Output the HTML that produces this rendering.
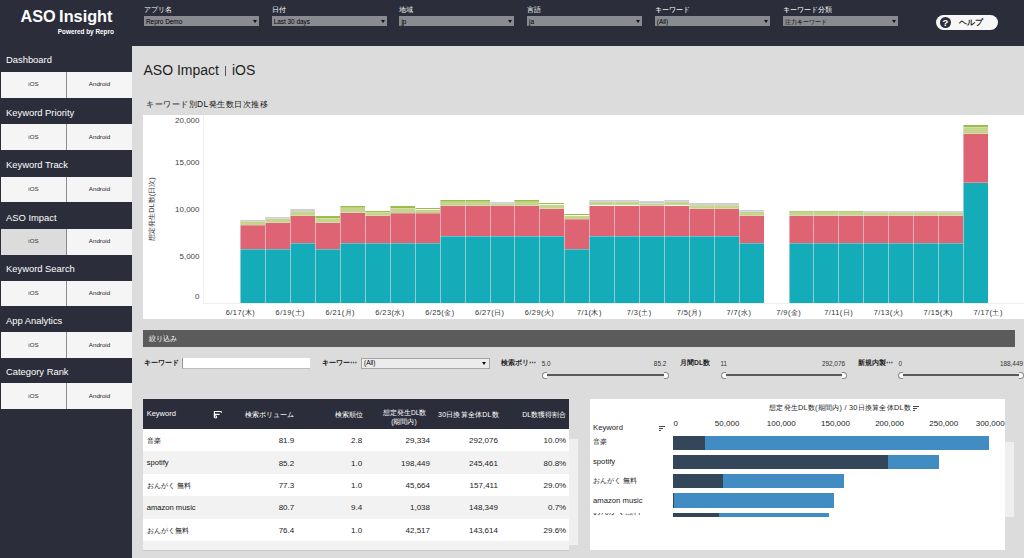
<!DOCTYPE html><html><head><meta charset="utf-8"><style>
*{margin:0;padding:0;box-sizing:border-box}
html,body{width:1024px;height:558px;overflow:hidden}
body{position:relative;background:#dcdcdc;font-family:"Liberation Sans",sans-serif;color:#222}
.ab{position:absolute}
.t{position:absolute;white-space:nowrap;line-height:1}
</style></head><body>
<div class="ab" style="left:0;top:0;width:1024px;height:46px;background:#2b2e3a"></div>
<div class="ab" style="left:0;top:46px;width:132px;height:512px;background:#2b2e3a"></div>
<div class="t" style="left:20.5px;top:7.6px;font-size:16.3px;font-weight:bold;color:#fff;word-spacing:-1.2px;letter-spacing:0px">ASO Insight</div>
<div class="t" style="left:57.8px;top:29.3px;font-size:6.4px;font-weight:bold;color:#fff">Powered by Repro</div>
<div class="t" style="left:144.0px;top:7.2px;font-size:6.8px;color:#fff">アプリ名</div>
<div class="ab" style="left:144.0px;top:16px;width:115px;height:10px;background:#8a8b90"></div>
<div class="t" style="left:146.0px;top:18.5px;font-size:6.4px;color:#000">Repro Demo</div>
<div class="ab" style="left:253.0px;top:20px;width:0;height:0;border-left:2.5px solid transparent;border-right:2.5px solid transparent;border-top:3px solid #111"></div>
<div class="t" style="left:271.7px;top:7.2px;font-size:6.8px;color:#fff">日付</div>
<div class="ab" style="left:271.7px;top:16px;width:115px;height:10px;background:#8a8b90"></div>
<div class="t" style="left:273.7px;top:18.5px;font-size:6.4px;color:#000">Last 30 days</div>
<div class="ab" style="left:380.7px;top:20px;width:0;height:0;border-left:2.5px solid transparent;border-right:2.5px solid transparent;border-top:3px solid #111"></div>
<div class="t" style="left:399.4px;top:7.2px;font-size:6.8px;color:#fff">地域</div>
<div class="ab" style="left:399.4px;top:16px;width:115px;height:10px;background:#8a8b90"></div>
<div class="t" style="left:401.4px;top:18.5px;font-size:6.4px;color:#000">jp</div>
<div class="ab" style="left:508.4px;top:20px;width:0;height:0;border-left:2.5px solid transparent;border-right:2.5px solid transparent;border-top:3px solid #111"></div>
<div class="t" style="left:527.1px;top:7.2px;font-size:6.8px;color:#fff">言語</div>
<div class="ab" style="left:527.1px;top:16px;width:115px;height:10px;background:#8a8b90"></div>
<div class="t" style="left:529.1px;top:18.5px;font-size:6.4px;color:#000">ja</div>
<div class="ab" style="left:636.1px;top:20px;width:0;height:0;border-left:2.5px solid transparent;border-right:2.5px solid transparent;border-top:3px solid #111"></div>
<div class="t" style="left:654.8px;top:7.2px;font-size:6.8px;color:#fff">キーワード</div>
<div class="ab" style="left:654.8px;top:16px;width:115px;height:10px;background:#8a8b90"></div>
<div class="t" style="left:656.8px;top:18.5px;font-size:6.4px;color:#000">(All)</div>
<div class="ab" style="left:763.8px;top:20px;width:0;height:0;border-left:2.5px solid transparent;border-right:2.5px solid transparent;border-top:3px solid #111"></div>
<div class="t" style="left:782.5px;top:7.2px;font-size:6.8px;color:#fff">キーワード分類</div>
<div class="ab" style="left:782.5px;top:16px;width:115px;height:10px;background:#8a8b90"></div>
<div class="t" style="left:784.5px;top:18.5px;font-size:6.4px;color:#000">注力キーワード</div>
<div class="ab" style="left:891.5px;top:20px;width:0;height:0;border-left:2.5px solid transparent;border-right:2.5px solid transparent;border-top:3px solid #111"></div>
<div class="ab" style="left:936px;top:14.5px;width:62px;height:15.5px;border-radius:8px;background:#f7f7f7"></div>
<div class="ab" style="left:940px;top:16.8px;width:11px;height:11px;border-radius:50%;background:#2b2e3a"></div>
<div class="t" style="left:942.6px;top:17.9px;font-size:9.6px;font-weight:bold;color:#fff">?</div>
<div class="t" style="left:959.3px;top:18.6px;font-size:7.8px;font-weight:bold;color:#222">ヘルプ</div>
<div class="t" style="left:6px;top:54.7px;font-size:9.4px;color:#fff">Dashboard</div>
<div class="ab" style="left:1px;top:72px;width:65px;height:25.6px;background:#f5f5f5"></div>
<div class="ab" style="left:66px;top:72px;width:1px;height:25.6px;background:#8c8c8c"></div>
<div class="ab" style="left:67px;top:72px;width:65px;height:25.6px;background:#f5f5f5"></div>
<div class="t" style="left:1px;width:65px;text-align:center;top:81.3px;font-size:6.2px;color:#333">iOS</div>
<div class="t" style="left:67px;width:65px;text-align:center;top:81.3px;font-size:6.2px;color:#222">Android</div>
<div class="t" style="left:6px;top:107.9px;font-size:9.4px;color:#fff">Keyword Priority</div>
<div class="ab" style="left:1px;top:124.3px;width:65px;height:25.6px;background:#f5f5f5"></div>
<div class="ab" style="left:66px;top:124.3px;width:1px;height:25.6px;background:#8c8c8c"></div>
<div class="ab" style="left:67px;top:124.3px;width:65px;height:25.6px;background:#f5f5f5"></div>
<div class="t" style="left:1px;width:65px;text-align:center;top:133.6px;font-size:6.2px;color:#333">iOS</div>
<div class="t" style="left:67px;width:65px;text-align:center;top:133.6px;font-size:6.2px;color:#222">Android</div>
<div class="t" style="left:6px;top:160.2px;font-size:9.4px;color:#fff">Keyword Track</div>
<div class="ab" style="left:1px;top:176.6px;width:65px;height:25.6px;background:#f5f5f5"></div>
<div class="ab" style="left:66px;top:176.6px;width:1px;height:25.6px;background:#8c8c8c"></div>
<div class="ab" style="left:67px;top:176.6px;width:65px;height:25.6px;background:#f5f5f5"></div>
<div class="t" style="left:1px;width:65px;text-align:center;top:185.9px;font-size:6.2px;color:#333">iOS</div>
<div class="t" style="left:67px;width:65px;text-align:center;top:185.9px;font-size:6.2px;color:#222">Android</div>
<div class="t" style="left:6px;top:212.6px;font-size:9.4px;color:#fff">ASO Impact</div>
<div class="ab" style="left:1px;top:229px;width:65px;height:25.6px;background:#dcdcdc"></div>
<div class="ab" style="left:66px;top:229px;width:1px;height:25.6px;background:#8c8c8c"></div>
<div class="ab" style="left:67px;top:229px;width:65px;height:25.6px;background:#f5f5f5"></div>
<div class="t" style="left:1px;width:65px;text-align:center;top:238.3px;font-size:6.2px;color:#333">iOS</div>
<div class="t" style="left:67px;width:65px;text-align:center;top:238.3px;font-size:6.2px;color:#222">Android</div>
<div class="t" style="left:6px;top:264.2px;font-size:9.4px;color:#fff">Keyword Search</div>
<div class="ab" style="left:1px;top:280.6px;width:65px;height:25.6px;background:#f5f5f5"></div>
<div class="ab" style="left:66px;top:280.6px;width:1px;height:25.6px;background:#8c8c8c"></div>
<div class="ab" style="left:67px;top:280.6px;width:65px;height:25.6px;background:#f5f5f5"></div>
<div class="t" style="left:1px;width:65px;text-align:center;top:289.9px;font-size:6.2px;color:#333">iOS</div>
<div class="t" style="left:67px;width:65px;text-align:center;top:289.9px;font-size:6.2px;color:#222">Android</div>
<div class="t" style="left:6px;top:315.8px;font-size:9.4px;color:#fff">App Analytics</div>
<div class="ab" style="left:1px;top:332.2px;width:65px;height:25.6px;background:#f5f5f5"></div>
<div class="ab" style="left:66px;top:332.2px;width:1px;height:25.6px;background:#8c8c8c"></div>
<div class="ab" style="left:67px;top:332.2px;width:65px;height:25.6px;background:#f5f5f5"></div>
<div class="t" style="left:1px;width:65px;text-align:center;top:341.5px;font-size:6.2px;color:#333">iOS</div>
<div class="t" style="left:67px;width:65px;text-align:center;top:341.5px;font-size:6.2px;color:#222">Android</div>
<div class="t" style="left:6px;top:366.9px;font-size:9.4px;color:#fff">Category Rank</div>
<div class="ab" style="left:1px;top:383.3px;width:65px;height:25.6px;background:#f5f5f5"></div>
<div class="ab" style="left:66px;top:383.3px;width:1px;height:25.6px;background:#8c8c8c"></div>
<div class="ab" style="left:67px;top:383.3px;width:65px;height:25.6px;background:#f5f5f5"></div>
<div class="t" style="left:1px;width:65px;text-align:center;top:392.6px;font-size:6.2px;color:#333">iOS</div>
<div class="t" style="left:67px;width:65px;text-align:center;top:392.6px;font-size:6.2px;color:#222">Android</div>
<div class="t" style="left:143.5px;top:62.6px;font-size:14px;color:#1e1e1e">ASO Impact<span style="display:inline-block;width:6.5px"></span><span style="display:inline-block;width:1px;height:10px;background:#555;vertical-align:-1px"></span><span style="display:inline-block;width:5.5px"></span>iOS</div>
<div class="t" style="left:146px;top:99.5px;font-size:8.4px;letter-spacing:0.5px;color:#111">キーワード別DL発生数日次推移</div>
<div class="ab" style="left:143px;top:115px;width:881px;height:204px;background:#fff"></div>
<div class="ab" style="left:203px;top:115px;width:1px;height:188px;background:#eeeeee"></div>
<div class="ab" style="left:203px;top:303px;width:821px;height:1px;background:#eeeeee"></div>
<div class="t" style="right:824.5px;top:117.2px;font-size:8px;color:#444">20,000</div>
<div class="t" style="right:824.5px;top:159.1px;font-size:8px;color:#444">15,000</div>
<div class="t" style="right:824.5px;top:205.7px;font-size:8px;color:#444">10,000</div>
<div class="t" style="right:824.5px;top:252.6px;font-size:8px;color:#444">5,000</div>
<div class="t" style="right:824.5px;top:292.8px;font-size:8px;color:#444">0</div>
<div class="t" style="left:151.9px;top:209.4px;font-size:7.4px;color:#333;transform:translate(-50%,-50%) rotate(-90deg)">想定発生DL数(日次)</div>
<div class="ab" style="left:240px;top:219.70px;width:25px;height:1.60px;background:#cfcfd2"></div>
<div class="ab" style="left:240px;top:221.30px;width:25px;height:3.70px;background:#c5d58c"></div>
<div class="ab" style="left:240px;top:225.00px;width:25px;height:24.20px;background:#de6373"></div>
<div class="ab" style="left:240px;top:249.20px;width:25px;height:53.80px;background:#13acb8"></div>
<div class="ab" style="left:240px;top:219.70px;width:1px;height:83.30px;background:rgba(225,225,225,.6)"></div>
<div class="ab" style="left:240px;top:220.80px;width:25px;height:1px;background:rgba(235,235,235,.35)"></div>
<div class="ab" style="left:240px;top:224.50px;width:25px;height:1px;background:rgba(235,235,235,.35)"></div>
<div class="ab" style="left:240px;top:248.70px;width:25px;height:1px;background:rgba(235,235,235,.35)"></div>
<div class="ab" style="left:265px;top:217.30px;width:25px;height:1.50px;background:#cfcfd2"></div>
<div class="ab" style="left:265px;top:218.80px;width:25px;height:3.90px;background:#c5d58c"></div>
<div class="ab" style="left:265px;top:222.70px;width:25px;height:26.50px;background:#de6373"></div>
<div class="ab" style="left:265px;top:249.20px;width:25px;height:53.80px;background:#13acb8"></div>
<div class="ab" style="left:265px;top:217.30px;width:1px;height:85.70px;background:rgba(225,225,225,.6)"></div>
<div class="ab" style="left:265px;top:218.30px;width:25px;height:1px;background:rgba(235,235,235,.35)"></div>
<div class="ab" style="left:265px;top:222.20px;width:25px;height:1px;background:rgba(235,235,235,.35)"></div>
<div class="ab" style="left:265px;top:248.70px;width:25px;height:1px;background:rgba(235,235,235,.35)"></div>
<div class="ab" style="left:290px;top:209.40px;width:25px;height:1.60px;background:#cfcfd2"></div>
<div class="ab" style="left:290px;top:211.00px;width:25px;height:4.80px;background:#c5d58c"></div>
<div class="ab" style="left:290px;top:215.80px;width:25px;height:27.30px;background:#de6373"></div>
<div class="ab" style="left:290px;top:243.10px;width:25px;height:59.90px;background:#13acb8"></div>
<div class="ab" style="left:290px;top:209.40px;width:1px;height:93.60px;background:rgba(225,225,225,.6)"></div>
<div class="ab" style="left:290px;top:210.50px;width:25px;height:1px;background:rgba(235,235,235,.35)"></div>
<div class="ab" style="left:290px;top:215.30px;width:25px;height:1px;background:rgba(235,235,235,.35)"></div>
<div class="ab" style="left:290px;top:242.60px;width:25px;height:1px;background:rgba(235,235,235,.35)"></div>
<div class="ab" style="left:315px;top:216.40px;width:25px;height:1.60px;background:#9cbd48"></div>
<div class="ab" style="left:315px;top:218.00px;width:25px;height:4.70px;background:#c5d58c"></div>
<div class="ab" style="left:315px;top:222.70px;width:25px;height:26.50px;background:#de6373"></div>
<div class="ab" style="left:315px;top:249.20px;width:25px;height:53.80px;background:#13acb8"></div>
<div class="ab" style="left:315px;top:216.40px;width:1px;height:86.60px;background:rgba(225,225,225,.6)"></div>
<div class="ab" style="left:315px;top:217.50px;width:25px;height:1px;background:rgba(235,235,235,.35)"></div>
<div class="ab" style="left:315px;top:222.20px;width:25px;height:1px;background:rgba(235,235,235,.35)"></div>
<div class="ab" style="left:315px;top:248.70px;width:25px;height:1px;background:rgba(235,235,235,.35)"></div>
<div class="ab" style="left:340px;top:206.00px;width:25px;height:1.60px;background:#9cbd48"></div>
<div class="ab" style="left:340px;top:207.60px;width:25px;height:5.10px;background:#c5d58c"></div>
<div class="ab" style="left:340px;top:212.70px;width:25px;height:30.40px;background:#de6373"></div>
<div class="ab" style="left:340px;top:243.10px;width:25px;height:59.90px;background:#13acb8"></div>
<div class="ab" style="left:340px;top:206.00px;width:1px;height:97.00px;background:rgba(225,225,225,.6)"></div>
<div class="ab" style="left:340px;top:207.10px;width:25px;height:1px;background:rgba(235,235,235,.35)"></div>
<div class="ab" style="left:340px;top:212.20px;width:25px;height:1px;background:rgba(235,235,235,.35)"></div>
<div class="ab" style="left:340px;top:242.60px;width:25px;height:1px;background:rgba(235,235,235,.35)"></div>
<div class="ab" style="left:365px;top:210.60px;width:25px;height:1.60px;background:#9cbd48"></div>
<div class="ab" style="left:365px;top:212.20px;width:25px;height:3.60px;background:#c5d58c"></div>
<div class="ab" style="left:365px;top:215.80px;width:25px;height:27.30px;background:#de6373"></div>
<div class="ab" style="left:365px;top:243.10px;width:25px;height:59.90px;background:#13acb8"></div>
<div class="ab" style="left:365px;top:210.60px;width:1px;height:92.40px;background:rgba(225,225,225,.6)"></div>
<div class="ab" style="left:365px;top:211.70px;width:25px;height:1px;background:rgba(235,235,235,.35)"></div>
<div class="ab" style="left:365px;top:215.30px;width:25px;height:1px;background:rgba(235,235,235,.35)"></div>
<div class="ab" style="left:365px;top:242.60px;width:25px;height:1px;background:rgba(235,235,235,.35)"></div>
<div class="ab" style="left:390px;top:206.40px;width:25px;height:1.80px;background:#9cbd48"></div>
<div class="ab" style="left:390px;top:208.20px;width:25px;height:4.80px;background:#c5d58c"></div>
<div class="ab" style="left:390px;top:213.00px;width:25px;height:30.10px;background:#de6373"></div>
<div class="ab" style="left:390px;top:243.10px;width:25px;height:59.90px;background:#13acb8"></div>
<div class="ab" style="left:390px;top:206.40px;width:1px;height:96.60px;background:rgba(225,225,225,.6)"></div>
<div class="ab" style="left:390px;top:207.70px;width:25px;height:1px;background:rgba(235,235,235,.35)"></div>
<div class="ab" style="left:390px;top:212.50px;width:25px;height:1px;background:rgba(235,235,235,.35)"></div>
<div class="ab" style="left:390px;top:242.60px;width:25px;height:1px;background:rgba(235,235,235,.35)"></div>
<div class="ab" style="left:415px;top:207.70px;width:25px;height:1.80px;background:#9cbd48"></div>
<div class="ab" style="left:415px;top:209.50px;width:25px;height:3.50px;background:#c5d58c"></div>
<div class="ab" style="left:415px;top:213.00px;width:25px;height:30.10px;background:#de6373"></div>
<div class="ab" style="left:415px;top:243.10px;width:25px;height:59.90px;background:#13acb8"></div>
<div class="ab" style="left:415px;top:207.70px;width:1px;height:95.30px;background:rgba(225,225,225,.6)"></div>
<div class="ab" style="left:415px;top:209.00px;width:25px;height:1px;background:rgba(235,235,235,.35)"></div>
<div class="ab" style="left:415px;top:212.50px;width:25px;height:1px;background:rgba(235,235,235,.35)"></div>
<div class="ab" style="left:415px;top:242.60px;width:25px;height:1px;background:rgba(235,235,235,.35)"></div>
<div class="ab" style="left:440px;top:199.50px;width:25px;height:2.00px;background:#9cbd48"></div>
<div class="ab" style="left:440px;top:201.50px;width:25px;height:4.00px;background:#c5d58c"></div>
<div class="ab" style="left:440px;top:205.50px;width:25px;height:30.60px;background:#de6373"></div>
<div class="ab" style="left:440px;top:236.10px;width:25px;height:66.90px;background:#13acb8"></div>
<div class="ab" style="left:440px;top:199.50px;width:1px;height:103.50px;background:rgba(225,225,225,.6)"></div>
<div class="ab" style="left:440px;top:201.00px;width:25px;height:1px;background:rgba(235,235,235,.35)"></div>
<div class="ab" style="left:440px;top:205.00px;width:25px;height:1px;background:rgba(235,235,235,.35)"></div>
<div class="ab" style="left:440px;top:235.60px;width:25px;height:1px;background:rgba(235,235,235,.35)"></div>
<div class="ab" style="left:465px;top:199.50px;width:25px;height:2.00px;background:#9cbd48"></div>
<div class="ab" style="left:465px;top:201.50px;width:25px;height:4.00px;background:#c5d58c"></div>
<div class="ab" style="left:465px;top:205.50px;width:25px;height:30.60px;background:#de6373"></div>
<div class="ab" style="left:465px;top:236.10px;width:25px;height:66.90px;background:#13acb8"></div>
<div class="ab" style="left:465px;top:199.50px;width:1px;height:103.50px;background:rgba(225,225,225,.6)"></div>
<div class="ab" style="left:465px;top:201.00px;width:25px;height:1px;background:rgba(235,235,235,.35)"></div>
<div class="ab" style="left:465px;top:205.00px;width:25px;height:1px;background:rgba(235,235,235,.35)"></div>
<div class="ab" style="left:465px;top:235.60px;width:25px;height:1px;background:rgba(235,235,235,.35)"></div>
<div class="ab" style="left:490px;top:202.00px;width:24px;height:1.50px;background:#cfcfd2"></div>
<div class="ab" style="left:490px;top:203.50px;width:24px;height:2.00px;background:#c5d58c"></div>
<div class="ab" style="left:490px;top:205.50px;width:24px;height:30.60px;background:#de6373"></div>
<div class="ab" style="left:490px;top:236.10px;width:24px;height:66.90px;background:#13acb8"></div>
<div class="ab" style="left:490px;top:202.00px;width:1px;height:101.00px;background:rgba(225,225,225,.6)"></div>
<div class="ab" style="left:490px;top:203.00px;width:24px;height:1px;background:rgba(235,235,235,.35)"></div>
<div class="ab" style="left:490px;top:205.00px;width:24px;height:1px;background:rgba(235,235,235,.35)"></div>
<div class="ab" style="left:490px;top:235.60px;width:24px;height:1px;background:rgba(235,235,235,.35)"></div>
<div class="ab" style="left:514px;top:199.50px;width:25px;height:2.00px;background:#9cbd48"></div>
<div class="ab" style="left:514px;top:201.50px;width:25px;height:4.00px;background:#c5d58c"></div>
<div class="ab" style="left:514px;top:205.50px;width:25px;height:30.60px;background:#de6373"></div>
<div class="ab" style="left:514px;top:236.10px;width:25px;height:66.90px;background:#13acb8"></div>
<div class="ab" style="left:514px;top:199.50px;width:1px;height:103.50px;background:rgba(225,225,225,.6)"></div>
<div class="ab" style="left:514px;top:201.00px;width:25px;height:1px;background:rgba(235,235,235,.35)"></div>
<div class="ab" style="left:514px;top:205.00px;width:25px;height:1px;background:rgba(235,235,235,.35)"></div>
<div class="ab" style="left:514px;top:235.60px;width:25px;height:1px;background:rgba(235,235,235,.35)"></div>
<div class="ab" style="left:539px;top:202.80px;width:25px;height:1.70px;background:#9cbd48"></div>
<div class="ab" style="left:539px;top:204.50px;width:25px;height:4.20px;background:#c5d58c"></div>
<div class="ab" style="left:539px;top:208.70px;width:25px;height:27.40px;background:#de6373"></div>
<div class="ab" style="left:539px;top:236.10px;width:25px;height:66.90px;background:#13acb8"></div>
<div class="ab" style="left:539px;top:202.80px;width:1px;height:100.20px;background:rgba(225,225,225,.6)"></div>
<div class="ab" style="left:539px;top:204.00px;width:25px;height:1px;background:rgba(235,235,235,.35)"></div>
<div class="ab" style="left:539px;top:208.20px;width:25px;height:1px;background:rgba(235,235,235,.35)"></div>
<div class="ab" style="left:539px;top:235.60px;width:25px;height:1px;background:rgba(235,235,235,.35)"></div>
<div class="ab" style="left:564px;top:213.70px;width:25px;height:1.80px;background:#9cbd48"></div>
<div class="ab" style="left:564px;top:215.50px;width:25px;height:3.70px;background:#c5d58c"></div>
<div class="ab" style="left:564px;top:219.20px;width:25px;height:30.20px;background:#de6373"></div>
<div class="ab" style="left:564px;top:249.40px;width:25px;height:53.60px;background:#13acb8"></div>
<div class="ab" style="left:564px;top:213.70px;width:1px;height:89.30px;background:rgba(225,225,225,.6)"></div>
<div class="ab" style="left:564px;top:215.00px;width:25px;height:1px;background:rgba(235,235,235,.35)"></div>
<div class="ab" style="left:564px;top:218.70px;width:25px;height:1px;background:rgba(235,235,235,.35)"></div>
<div class="ab" style="left:564px;top:248.90px;width:25px;height:1px;background:rgba(235,235,235,.35)"></div>
<div class="ab" style="left:589px;top:200.20px;width:25px;height:1.50px;background:#cfcfd2"></div>
<div class="ab" style="left:589px;top:201.70px;width:25px;height:3.80px;background:#c5d58c"></div>
<div class="ab" style="left:589px;top:205.50px;width:25px;height:30.60px;background:#de6373"></div>
<div class="ab" style="left:589px;top:236.10px;width:25px;height:66.90px;background:#13acb8"></div>
<div class="ab" style="left:589px;top:200.20px;width:1px;height:102.80px;background:rgba(225,225,225,.6)"></div>
<div class="ab" style="left:589px;top:201.20px;width:25px;height:1px;background:rgba(235,235,235,.35)"></div>
<div class="ab" style="left:589px;top:205.00px;width:25px;height:1px;background:rgba(235,235,235,.35)"></div>
<div class="ab" style="left:589px;top:235.60px;width:25px;height:1px;background:rgba(235,235,235,.35)"></div>
<div class="ab" style="left:614px;top:200.20px;width:25px;height:1.50px;background:#cfcfd2"></div>
<div class="ab" style="left:614px;top:201.70px;width:25px;height:3.80px;background:#c5d58c"></div>
<div class="ab" style="left:614px;top:205.50px;width:25px;height:30.60px;background:#de6373"></div>
<div class="ab" style="left:614px;top:236.10px;width:25px;height:66.90px;background:#13acb8"></div>
<div class="ab" style="left:614px;top:200.20px;width:1px;height:102.80px;background:rgba(225,225,225,.6)"></div>
<div class="ab" style="left:614px;top:201.20px;width:25px;height:1px;background:rgba(235,235,235,.35)"></div>
<div class="ab" style="left:614px;top:205.00px;width:25px;height:1px;background:rgba(235,235,235,.35)"></div>
<div class="ab" style="left:614px;top:235.60px;width:25px;height:1px;background:rgba(235,235,235,.35)"></div>
<div class="ab" style="left:639px;top:201.00px;width:25px;height:2.50px;background:#cfcfd2"></div>
<div class="ab" style="left:639px;top:203.50px;width:25px;height:2.00px;background:#c5d58c"></div>
<div class="ab" style="left:639px;top:205.50px;width:25px;height:30.60px;background:#de6373"></div>
<div class="ab" style="left:639px;top:236.10px;width:25px;height:66.90px;background:#13acb8"></div>
<div class="ab" style="left:639px;top:201.00px;width:1px;height:102.00px;background:rgba(225,225,225,.6)"></div>
<div class="ab" style="left:639px;top:203.00px;width:25px;height:1px;background:rgba(235,235,235,.35)"></div>
<div class="ab" style="left:639px;top:205.00px;width:25px;height:1px;background:rgba(235,235,235,.35)"></div>
<div class="ab" style="left:639px;top:235.60px;width:25px;height:1px;background:rgba(235,235,235,.35)"></div>
<div class="ab" style="left:664px;top:200.20px;width:25px;height:1.50px;background:#cfcfd2"></div>
<div class="ab" style="left:664px;top:201.70px;width:25px;height:3.80px;background:#c5d58c"></div>
<div class="ab" style="left:664px;top:205.50px;width:25px;height:30.60px;background:#de6373"></div>
<div class="ab" style="left:664px;top:236.10px;width:25px;height:66.90px;background:#13acb8"></div>
<div class="ab" style="left:664px;top:200.20px;width:1px;height:102.80px;background:rgba(225,225,225,.6)"></div>
<div class="ab" style="left:664px;top:201.20px;width:25px;height:1px;background:rgba(235,235,235,.35)"></div>
<div class="ab" style="left:664px;top:205.00px;width:25px;height:1px;background:rgba(235,235,235,.35)"></div>
<div class="ab" style="left:664px;top:235.60px;width:25px;height:1px;background:rgba(235,235,235,.35)"></div>
<div class="ab" style="left:689px;top:203.30px;width:25px;height:1.70px;background:#cfcfd2"></div>
<div class="ab" style="left:689px;top:205.00px;width:25px;height:3.70px;background:#c5d58c"></div>
<div class="ab" style="left:689px;top:208.70px;width:25px;height:27.40px;background:#de6373"></div>
<div class="ab" style="left:689px;top:236.10px;width:25px;height:66.90px;background:#13acb8"></div>
<div class="ab" style="left:689px;top:203.30px;width:1px;height:99.70px;background:rgba(225,225,225,.6)"></div>
<div class="ab" style="left:689px;top:204.50px;width:25px;height:1px;background:rgba(235,235,235,.35)"></div>
<div class="ab" style="left:689px;top:208.20px;width:25px;height:1px;background:rgba(235,235,235,.35)"></div>
<div class="ab" style="left:689px;top:235.60px;width:25px;height:1px;background:rgba(235,235,235,.35)"></div>
<div class="ab" style="left:714px;top:203.30px;width:25px;height:1.70px;background:#cfcfd2"></div>
<div class="ab" style="left:714px;top:205.00px;width:25px;height:3.70px;background:#c5d58c"></div>
<div class="ab" style="left:714px;top:208.70px;width:25px;height:27.40px;background:#de6373"></div>
<div class="ab" style="left:714px;top:236.10px;width:25px;height:66.90px;background:#13acb8"></div>
<div class="ab" style="left:714px;top:203.30px;width:1px;height:99.70px;background:rgba(225,225,225,.6)"></div>
<div class="ab" style="left:714px;top:204.50px;width:25px;height:1px;background:rgba(235,235,235,.35)"></div>
<div class="ab" style="left:714px;top:208.20px;width:25px;height:1px;background:rgba(235,235,235,.35)"></div>
<div class="ab" style="left:714px;top:235.60px;width:25px;height:1px;background:rgba(235,235,235,.35)"></div>
<div class="ab" style="left:739px;top:210.30px;width:25px;height:1.50px;background:#cfcfd2"></div>
<div class="ab" style="left:739px;top:211.80px;width:25px;height:4.00px;background:#c5d58c"></div>
<div class="ab" style="left:739px;top:215.80px;width:25px;height:27.30px;background:#de6373"></div>
<div class="ab" style="left:739px;top:243.10px;width:25px;height:59.90px;background:#13acb8"></div>
<div class="ab" style="left:739px;top:210.30px;width:1px;height:92.70px;background:rgba(225,225,225,.6)"></div>
<div class="ab" style="left:739px;top:211.30px;width:25px;height:1px;background:rgba(235,235,235,.35)"></div>
<div class="ab" style="left:739px;top:215.30px;width:25px;height:1px;background:rgba(235,235,235,.35)"></div>
<div class="ab" style="left:739px;top:242.60px;width:25px;height:1px;background:rgba(235,235,235,.35)"></div>
<div class="ab" style="left:789px;top:210.60px;width:24px;height:1.00px;background:#9cbd48"></div>
<div class="ab" style="left:789px;top:211.60px;width:24px;height:4.20px;background:#c5d58c"></div>
<div class="ab" style="left:789px;top:215.80px;width:24px;height:27.30px;background:#de6373"></div>
<div class="ab" style="left:789px;top:243.10px;width:24px;height:59.90px;background:#13acb8"></div>
<div class="ab" style="left:789px;top:210.60px;width:1px;height:92.40px;background:rgba(225,225,225,.6)"></div>
<div class="ab" style="left:789px;top:211.10px;width:24px;height:1px;background:rgba(235,235,235,.35)"></div>
<div class="ab" style="left:789px;top:215.30px;width:24px;height:1px;background:rgba(235,235,235,.35)"></div>
<div class="ab" style="left:789px;top:242.60px;width:24px;height:1px;background:rgba(235,235,235,.35)"></div>
<div class="ab" style="left:813px;top:210.60px;width:25px;height:1.00px;background:#9cbd48"></div>
<div class="ab" style="left:813px;top:211.60px;width:25px;height:4.20px;background:#c5d58c"></div>
<div class="ab" style="left:813px;top:215.80px;width:25px;height:27.30px;background:#de6373"></div>
<div class="ab" style="left:813px;top:243.10px;width:25px;height:59.90px;background:#13acb8"></div>
<div class="ab" style="left:813px;top:210.60px;width:1px;height:92.40px;background:rgba(225,225,225,.6)"></div>
<div class="ab" style="left:813px;top:211.10px;width:25px;height:1px;background:rgba(235,235,235,.35)"></div>
<div class="ab" style="left:813px;top:215.30px;width:25px;height:1px;background:rgba(235,235,235,.35)"></div>
<div class="ab" style="left:813px;top:242.60px;width:25px;height:1px;background:rgba(235,235,235,.35)"></div>
<div class="ab" style="left:838px;top:210.60px;width:25px;height:1.00px;background:#9cbd48"></div>
<div class="ab" style="left:838px;top:211.60px;width:25px;height:4.20px;background:#c5d58c"></div>
<div class="ab" style="left:838px;top:215.80px;width:25px;height:27.30px;background:#de6373"></div>
<div class="ab" style="left:838px;top:243.10px;width:25px;height:59.90px;background:#13acb8"></div>
<div class="ab" style="left:838px;top:210.60px;width:1px;height:92.40px;background:rgba(225,225,225,.6)"></div>
<div class="ab" style="left:838px;top:211.10px;width:25px;height:1px;background:rgba(235,235,235,.35)"></div>
<div class="ab" style="left:838px;top:215.30px;width:25px;height:1px;background:rgba(235,235,235,.35)"></div>
<div class="ab" style="left:838px;top:242.60px;width:25px;height:1px;background:rgba(235,235,235,.35)"></div>
<div class="ab" style="left:863px;top:211.40px;width:25px;height:1.00px;background:#cfcfd2"></div>
<div class="ab" style="left:863px;top:212.40px;width:25px;height:3.40px;background:#c5d58c"></div>
<div class="ab" style="left:863px;top:215.80px;width:25px;height:27.30px;background:#de6373"></div>
<div class="ab" style="left:863px;top:243.10px;width:25px;height:59.90px;background:#13acb8"></div>
<div class="ab" style="left:863px;top:211.40px;width:1px;height:91.60px;background:rgba(225,225,225,.6)"></div>
<div class="ab" style="left:863px;top:211.90px;width:25px;height:1px;background:rgba(235,235,235,.35)"></div>
<div class="ab" style="left:863px;top:215.30px;width:25px;height:1px;background:rgba(235,235,235,.35)"></div>
<div class="ab" style="left:863px;top:242.60px;width:25px;height:1px;background:rgba(235,235,235,.35)"></div>
<div class="ab" style="left:888px;top:211.40px;width:25px;height:1.00px;background:#cfcfd2"></div>
<div class="ab" style="left:888px;top:212.40px;width:25px;height:3.40px;background:#c5d58c"></div>
<div class="ab" style="left:888px;top:215.80px;width:25px;height:27.30px;background:#de6373"></div>
<div class="ab" style="left:888px;top:243.10px;width:25px;height:59.90px;background:#13acb8"></div>
<div class="ab" style="left:888px;top:211.40px;width:1px;height:91.60px;background:rgba(225,225,225,.6)"></div>
<div class="ab" style="left:888px;top:211.90px;width:25px;height:1px;background:rgba(235,235,235,.35)"></div>
<div class="ab" style="left:888px;top:215.30px;width:25px;height:1px;background:rgba(235,235,235,.35)"></div>
<div class="ab" style="left:888px;top:242.60px;width:25px;height:1px;background:rgba(235,235,235,.35)"></div>
<div class="ab" style="left:913px;top:211.40px;width:25px;height:1.00px;background:#cfcfd2"></div>
<div class="ab" style="left:913px;top:212.40px;width:25px;height:3.40px;background:#c5d58c"></div>
<div class="ab" style="left:913px;top:215.80px;width:25px;height:27.30px;background:#de6373"></div>
<div class="ab" style="left:913px;top:243.10px;width:25px;height:59.90px;background:#13acb8"></div>
<div class="ab" style="left:913px;top:211.40px;width:1px;height:91.60px;background:rgba(225,225,225,.6)"></div>
<div class="ab" style="left:913px;top:211.90px;width:25px;height:1px;background:rgba(235,235,235,.35)"></div>
<div class="ab" style="left:913px;top:215.30px;width:25px;height:1px;background:rgba(235,235,235,.35)"></div>
<div class="ab" style="left:913px;top:242.60px;width:25px;height:1px;background:rgba(235,235,235,.35)"></div>
<div class="ab" style="left:938px;top:211.40px;width:25px;height:1.00px;background:#cfcfd2"></div>
<div class="ab" style="left:938px;top:212.40px;width:25px;height:3.40px;background:#c5d58c"></div>
<div class="ab" style="left:938px;top:215.80px;width:25px;height:27.30px;background:#de6373"></div>
<div class="ab" style="left:938px;top:243.10px;width:25px;height:59.90px;background:#13acb8"></div>
<div class="ab" style="left:938px;top:211.40px;width:1px;height:91.60px;background:rgba(225,225,225,.6)"></div>
<div class="ab" style="left:938px;top:211.90px;width:25px;height:1px;background:rgba(235,235,235,.35)"></div>
<div class="ab" style="left:938px;top:215.30px;width:25px;height:1px;background:rgba(235,235,235,.35)"></div>
<div class="ab" style="left:938px;top:242.60px;width:25px;height:1px;background:rgba(235,235,235,.35)"></div>
<div class="ab" style="left:963px;top:124.80px;width:25px;height:2.20px;background:#9cbd48"></div>
<div class="ab" style="left:963px;top:127.00px;width:25px;height:6.90px;background:#c5d58c"></div>
<div class="ab" style="left:963px;top:133.90px;width:25px;height:48.70px;background:#de6373"></div>
<div class="ab" style="left:963px;top:182.60px;width:25px;height:120.40px;background:#13acb8"></div>
<div class="ab" style="left:963px;top:124.80px;width:1px;height:178.20px;background:rgba(225,225,225,.6)"></div>
<div class="ab" style="left:963px;top:126.50px;width:25px;height:1px;background:rgba(235,235,235,.35)"></div>
<div class="ab" style="left:963px;top:133.40px;width:25px;height:1px;background:rgba(235,235,235,.35)"></div>
<div class="ab" style="left:963px;top:182.10px;width:25px;height:1px;background:rgba(235,235,235,.35)"></div>
<div class="t" style="left:200.3px;width:80px;text-align:center;top:308.5px;font-size:7.4px;letter-spacing:0.45px;text-indent:0.45px;color:#333">6/17(木)</div>
<div class="t" style="left:250.1px;width:80px;text-align:center;top:308.5px;font-size:7.4px;letter-spacing:0.45px;text-indent:0.45px;color:#333">6/19(土)</div>
<div class="t" style="left:300.0px;width:80px;text-align:center;top:308.5px;font-size:7.4px;letter-spacing:0.45px;text-indent:0.45px;color:#333">6/21(月)</div>
<div class="t" style="left:349.8px;width:80px;text-align:center;top:308.5px;font-size:7.4px;letter-spacing:0.45px;text-indent:0.45px;color:#333">6/23(水)</div>
<div class="t" style="left:399.7px;width:80px;text-align:center;top:308.5px;font-size:7.4px;letter-spacing:0.45px;text-indent:0.45px;color:#333">6/25(金)</div>
<div class="t" style="left:449.5px;width:80px;text-align:center;top:308.5px;font-size:7.4px;letter-spacing:0.45px;text-indent:0.45px;color:#333">6/27(日)</div>
<div class="t" style="left:499.3px;width:80px;text-align:center;top:308.5px;font-size:7.4px;letter-spacing:0.45px;text-indent:0.45px;color:#333">6/29(火)</div>
<div class="t" style="left:549.2px;width:80px;text-align:center;top:308.5px;font-size:7.4px;letter-spacing:0.45px;text-indent:0.45px;color:#333">7/1(木)</div>
<div class="t" style="left:599.0px;width:80px;text-align:center;top:308.5px;font-size:7.4px;letter-spacing:0.45px;text-indent:0.45px;color:#333">7/3(土)</div>
<div class="t" style="left:648.9px;width:80px;text-align:center;top:308.5px;font-size:7.4px;letter-spacing:0.45px;text-indent:0.45px;color:#333">7/5(月)</div>
<div class="t" style="left:698.7px;width:80px;text-align:center;top:308.5px;font-size:7.4px;letter-spacing:0.45px;text-indent:0.45px;color:#333">7/7(水)</div>
<div class="t" style="left:748.5px;width:80px;text-align:center;top:308.5px;font-size:7.4px;letter-spacing:0.45px;text-indent:0.45px;color:#333">7/9(金)</div>
<div class="t" style="left:798.4px;width:80px;text-align:center;top:308.5px;font-size:7.4px;letter-spacing:0.45px;text-indent:0.45px;color:#333">7/11(日)</div>
<div class="t" style="left:848.2px;width:80px;text-align:center;top:308.5px;font-size:7.4px;letter-spacing:0.45px;text-indent:0.45px;color:#333">7/13(火)</div>
<div class="t" style="left:898.1px;width:80px;text-align:center;top:308.5px;font-size:7.4px;letter-spacing:0.45px;text-indent:0.45px;color:#333">7/15(木)</div>
<div class="t" style="left:947.9px;width:80px;text-align:center;top:308.5px;font-size:7.4px;letter-spacing:0.45px;text-indent:0.45px;color:#333">7/17(土)</div>
<div class="ab" style="left:143px;top:330px;width:872px;height:17px;background:#5b5b5b"></div>
<div class="t" style="left:148.5px;top:334.5px;font-size:7px;color:#fff">絞り込み</div>
<div class="t" style="left:143.8px;top:359.5px;font-size:6.8px;font-weight:bold;color:#222">キーワード</div>
<div class="ab" style="left:182px;top:358px;width:128px;height:10.5px;background:#fff;border-left:1px solid #9a9a9a;border-bottom:1px solid #bdbdbd"></div>
<div class="t" style="left:322.3px;top:359.5px;font-size:6.8px;font-weight:bold;color:#222">キーワー⋯</div>
<div class="ab" style="left:361px;top:358px;width:129px;height:10.5px;background:#ececec;border:1px solid #a6a6a6"></div>
<div class="t" style="left:364px;top:359.8px;font-size:6.4px;color:#000">(All)</div>
<div class="ab" style="left:482px;top:362px;width:0;height:0;border-left:2.5px solid transparent;border-right:2.5px solid transparent;border-top:3px solid #111"></div>
<div class="t" style="left:501px;top:359.5px;font-size:6.8px;font-weight:bold;color:#222">検索ボリ⋯</div>
<div class="t" style="left:541.7px;top:360.5px;font-size:6.4px;color:#333">5.0</div>
<div class="t" style="right:357.70000000000005px;top:360.5px;font-size:6.4px;color:#333">85.2</div>
<div class="ab" style="left:545.6px;top:373.8px;width:119.19999999999993px;height:2.6px;background:#5a5a5a"></div>
<div class="ab" style="left:542.1px;top:371.5px;width:5px;height:7px;border-radius:4px 0 0 4px;background:#fff;border:1px solid #8a8a8a;border-right:none"></div>
<div class="ab" style="left:663.8px;top:371.5px;width:5px;height:7px;border-radius:0 4px 4px 0;background:#fff;border:1px solid #8a8a8a;border-left:none"></div>
<div class="t" style="left:680px;top:359.5px;font-size:6.8px;font-weight:bold;color:#222">月間DL数</div>
<div class="t" style="left:720.4px;top:360.5px;font-size:6.4px;color:#333">11</div>
<div class="t" style="right:179px;top:360.5px;font-size:6.4px;color:#333">292,076</div>
<div class="ab" style="left:724px;top:373.8px;width:119px;height:2.6px;background:#5a5a5a"></div>
<div class="ab" style="left:720.5px;top:371.5px;width:5px;height:7px;border-radius:4px 0 0 4px;background:#fff;border:1px solid #8a8a8a;border-right:none"></div>
<div class="ab" style="left:842px;top:371.5px;width:5px;height:7px;border-radius:0 4px 4px 0;background:#fff;border:1px solid #8a8a8a;border-left:none"></div>
<div class="t" style="left:858.2px;top:359.5px;font-size:6.8px;font-weight:bold;color:#222">新規内製⋯</div>
<div class="t" style="left:898.6px;top:360.5px;font-size:6.4px;color:#333">0</div>
<div class="t" style="right:1px;top:360.5px;font-size:6.4px;color:#333">188,449</div>
<div class="ab" style="left:901px;top:373.8px;width:119px;height:2.6px;background:#5a5a5a"></div>
<div class="ab" style="left:897.5px;top:371.5px;width:5px;height:7px;border-radius:4px 0 0 4px;background:#fff;border:1px solid #8a8a8a;border-right:none"></div>
<div class="ab" style="left:1019px;top:371.5px;width:5px;height:7px;border-radius:0 4px 4px 0;background:#fff;border:1px solid #8a8a8a;border-left:none"></div>
<div class="ab" style="left:143px;top:399px;width:425.7px;height:30px;background:#2b2e3a"></div>
<div class="t" style="left:146.7px;top:410px;font-size:7.5px;color:#fff">Keyword</div>
<svg class="ab" style="left:213px;top:410px" width="10" height="9" viewBox="0 0 10 9"><path d="M1.4 1.5 H7.6 Q8.3 1.5 8.3 2.3 M1.4 1.5 V6.8 M1.4 4.3 H6.2" stroke="#fff" stroke-width="1.2" fill="none" stroke-linecap="round"/><circle cx="2.5" cy="6.9" r="1.1" stroke="#fff" stroke-width="1.1" fill="none"/></svg>
<div class="t" style="right:729.8px;top:410.5px;font-size:7px;color:#fff">検索ボリューム</div>
<div class="t" style="right:661.2px;top:410.5px;font-size:7px;color:#fff">検索順位</div>
<div class="t" style="right:525.2px;top:410.5px;font-size:7px;color:#fff"><span style="letter-spacing:0.2px">30日換算全体DL数</span></div>
<div class="t" style="right:457.8px;top:410.5px;font-size:7px;color:#fff">DL数獲得割合</div>
<div class="t" style="left:383px;width:42px;text-align:center;top:407.5px;font-size:6.6px;line-height:9px;color:#fff">想定発生DL数<br>(期間内)</div>
<div class="ab" style="left:143px;top:429.00px;width:425.7px;height:22.45px;background:#ffffff"></div>
<div class="t" style="left:146.7px;top:437.30px;font-size:7.0px;color:#111">音楽</div>
<div class="t" style="right:729.8px;top:437.10px;font-size:8px;color:#222">81.9</div>
<div class="t" style="right:661.9px;top:437.10px;font-size:8px;color:#222">2.8</div>
<div class="t" style="right:594.0px;top:437.10px;font-size:8px;color:#222">29,334</div>
<div class="t" style="right:526.1px;top:437.10px;font-size:8px;color:#222">292,076</div>
<div class="t" style="right:457.8px;top:437.10px;font-size:8px;color:#222">10.0%</div>
<div class="ab" style="left:143px;top:451.45px;width:425.7px;height:22.45px;background:#f2f2f2"></div>
<div class="t" style="left:146.7px;top:459.25px;font-size:7.6px;color:#111">spotify</div>
<div class="t" style="right:729.8px;top:459.55px;font-size:8px;color:#222">85.2</div>
<div class="t" style="right:661.9px;top:459.55px;font-size:8px;color:#222">1.0</div>
<div class="t" style="right:594.0px;top:459.55px;font-size:8px;color:#222">198,449</div>
<div class="t" style="right:526.1px;top:459.55px;font-size:8px;color:#222">245,461</div>
<div class="t" style="right:457.8px;top:459.55px;font-size:8px;color:#222">80.8%</div>
<div class="ab" style="left:143px;top:473.90px;width:425.7px;height:22.45px;background:#ffffff"></div>
<div class="t" style="left:146.7px;top:482.20px;font-size:7.0px;color:#111">おんがく 無料</div>
<div class="t" style="right:729.8px;top:482.00px;font-size:8px;color:#222">77.3</div>
<div class="t" style="right:661.9px;top:482.00px;font-size:8px;color:#222">1.0</div>
<div class="t" style="right:594.0px;top:482.00px;font-size:8px;color:#222">45,664</div>
<div class="t" style="right:526.1px;top:482.00px;font-size:8px;color:#222">157,411</div>
<div class="t" style="right:457.8px;top:482.00px;font-size:8px;color:#222">29.0%</div>
<div class="ab" style="left:143px;top:496.35px;width:425.7px;height:22.45px;background:#f2f2f2"></div>
<div class="t" style="left:146.7px;top:504.15px;font-size:7.6px;color:#111">amazon music</div>
<div class="t" style="right:729.8px;top:504.45px;font-size:8px;color:#222">80.7</div>
<div class="t" style="right:661.9px;top:504.45px;font-size:8px;color:#222">9.4</div>
<div class="t" style="right:594.0px;top:504.45px;font-size:8px;color:#222">1,038</div>
<div class="t" style="right:526.1px;top:504.45px;font-size:8px;color:#222">148,349</div>
<div class="t" style="right:457.8px;top:504.45px;font-size:8px;color:#222">0.7%</div>
<div class="ab" style="left:143px;top:518.80px;width:425.7px;height:22.45px;background:#ffffff"></div>
<div class="t" style="left:146.7px;top:527.10px;font-size:7.0px;color:#111">おんがく無料</div>
<div class="t" style="right:729.8px;top:526.90px;font-size:8px;color:#222">76.4</div>
<div class="t" style="right:661.9px;top:526.90px;font-size:8px;color:#222">1.0</div>
<div class="t" style="right:594.0px;top:526.90px;font-size:8px;color:#222">42,517</div>
<div class="t" style="right:526.1px;top:526.90px;font-size:8px;color:#222">143,614</div>
<div class="t" style="right:457.8px;top:526.90px;font-size:8px;color:#222">29.6%</div>
<div class="ab" style="left:143px;top:541.25px;width:425.7px;height:8.75px;background:#f2f2f2"></div>
<div class="ab" style="left:143px;top:549.5px;width:425.7px;height:1px;background:#c8c8c8"></div>
<div class="ab" style="left:568.7px;top:439px;width:9px;height:106px;background:#efefef"></div>
<div class="ab" style="left:590px;top:399px;width:415px;height:151px;background:#fff"></div>
<div class="ab" style="left:1005px;top:441.7px;width:9px;height:75.3px;background:#efefef"></div>
<div class="t" style="left:769px;top:404px;font-size:7.3px;letter-spacing:0.25px;color:#222">想定発生DL数(期間内) / 30日換算全体DL数</div>
<div class="ab" style="left:913px;top:405.5px;width:5.5px;height:1px;background:#444"></div>
<div class="ab" style="left:913px;top:407.5px;width:3.5px;height:1px;background:#444"></div>
<div class="ab" style="left:913px;top:409.5px;width:2px;height:1px;background:#444"></div>
<div class="t" style="left:593px;top:423.5px;font-size:7.7px;color:#222">Keyword</div>
<div class="ab" style="left:659px;top:425.5px;width:5.5px;height:1px;background:#444"></div>
<div class="ab" style="left:659px;top:427.5px;width:3.5px;height:1px;background:#444"></div>
<div class="ab" style="left:659px;top:429.5px;width:2px;height:1px;background:#444"></div>
<div class="t" style="left:673.6px;top:420px;font-size:8px;color:#222">0</div>
<div class="t" style="left:687.1px;width:80px;text-align:center;top:420px;font-size:8px;color:#222">50,000</div>
<div class="t" style="left:741.3px;width:80px;text-align:center;top:420px;font-size:8px;color:#222">100,000</div>
<div class="t" style="left:795.5px;width:80px;text-align:center;top:420px;font-size:8px;color:#222">150,000</div>
<div class="t" style="left:849.6px;width:80px;text-align:center;top:420px;font-size:8px;color:#222">200,000</div>
<div class="t" style="left:903.8px;width:80px;text-align:center;top:420px;font-size:8px;color:#222">250,000</div>
<div class="t" style="right:19.399999999999977px;top:420px;font-size:8px;color:#222">300,000</div>
<div class="ab" style="left:673px;top:436.3px;width:316.3px;height:13.4px;background:#418cc2"></div>
<div class="ab" style="left:673px;top:436.3px;width:31.8px;height:13.4px;background:#33465a"></div>
<div class="t" style="left:593px;top:439.4px;font-size:7.1px;color:#222">音楽</div>
<div class="ab" style="left:673px;top:455.2px;width:265.8px;height:13.4px;background:#418cc2"></div>
<div class="ab" style="left:673px;top:455.2px;width:214.9px;height:13.4px;background:#33465a"></div>
<div class="t" style="left:593px;top:457.9px;font-size:7.7px;color:#222">spotify</div>
<div class="ab" style="left:673px;top:474px;width:170.5px;height:14.2px;background:#418cc2"></div>
<div class="ab" style="left:673px;top:474px;width:49.5px;height:14.2px;background:#33465a"></div>
<div class="t" style="left:593px;top:477.5px;font-size:7.1px;color:#222">おんがく 無料</div>
<div class="ab" style="left:673px;top:493.2px;width:160.7px;height:14.7px;background:#418cc2"></div>
<div class="ab" style="left:673px;top:493.2px;width:1.1px;height:14.7px;background:#33465a"></div>
<div class="t" style="left:593px;top:496.5px;font-size:7.7px;color:#222">amazon music</div>
<div class="ab" style="left:673px;top:512.9px;width:155.5px;height:4.1px;background:#418cc2"></div>
<div class="ab" style="left:673px;top:512.9px;width:46.0px;height:4.1px;background:#33465a"></div>
<div class="ab" style="left:593px;top:513px;width:60px;height:4px;overflow:hidden"><div class="t" style="left:0;top:-5px;font-size:7.7px;color:#222">おんがく無料</div></div>
</body></html>
